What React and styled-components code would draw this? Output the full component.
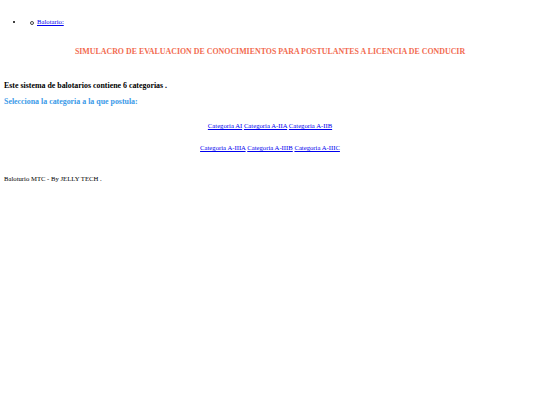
import React from "react"
import { createGlobalStyle, styled } from "styled-components"

const GlobalStyle = createGlobalStyle`
  html, body {
    margin: 0;
    padding: 0;
    background: #ffffff;
  }
  body {
    font-family: "Liberation Serif", "Times New Roman", serif;
    font-size: 6.7px;
    color: #000000;
  }
`

const Page = styled.div`
  padding: 4px;
`

const Menu = styled.ul`
  margin: 13px 0 0 0;
  padding-left: 20px;
  list-style: disc;
`

const SubMenu = styled.ul`
  margin: 0;
  padding-left: 13px;
  list-style: none;
`

const Item = styled.li`
  line-height: 10px;
`

const SubItem = styled.li`
  line-height: 10px;
  position: relative;

  /* hollow bullet of the nested list */
  &::before {
    content: "";
    position: absolute;
    left: -7px;
    top: 4px;
    width: 2px;
    height: 2px;
    border: 0.5px solid #444444;
    border-radius: 50%;
  }
`

const Link = styled.a`
  color: #0000ee;
  text-decoration: underline;
  cursor: pointer;
`

const Title = styled.h3`
  margin: 20px 0 0 0;
  text-align: center;
  font-size: 7.9px;
  font-weight: bold;
  color: #f26b50;
`

const Info = styled.h4`
  margin: 25px 0 0 0;
  font-size: 7.9px;
  font-weight: bold;
`

const Prompt = styled.h3`
  margin: 7px 0 0 0;
  font-size: 7.9px;
  font-weight: bold;
  color: #3a9ae8;
`

const LinkRow = styled.p`
  margin: ${(props) => props.$top}px 0 0 0;
  text-align: center;
  line-height: 10px;
`

const Footer = styled.p`
  margin: 21px 0 0 0;
  line-height: 10px;
`

const rows = [
  ["Categoria AI", "Categoria A-IIA", "Categoria A-IIB"],
  ["Categoria A-IIIA", "Categoria A-IIIB", "Categoria A-IIIC"],
]

export default function App() {
  return (
    <>
      <GlobalStyle />
      <Page>
        <Menu>
          <Item>
            <SubMenu>
              <SubItem>
                <Link>Balotario:</Link>
              </SubItem>
            </SubMenu>
          </Item>
        </Menu>
        <Title>
          SIMULACRO DE EVALUACION DE CONOCIMIENTOS PARA POSTULANTES A LICENCIA DE CONDUCIR
        </Title>
        <Info>Este sistema de balotarios contiene 6 categorias .</Info>
        <Prompt>Selecciona la categoria a la que postula:</Prompt>
        {rows.map((row, i) => (
          <LinkRow key={i} $top={i === 0 ? 15 : 12}>
            {row.map((name, j) => (
              <React.Fragment key={name}>
                {j > 0 && " "}
                <Link>{name}</Link>
              </React.Fragment>
            ))}
          </LinkRow>
        ))}
        <Footer>Baloturio MTC - By JELLY TECH .</Footer>
      </Page>
    </>
  )
}
